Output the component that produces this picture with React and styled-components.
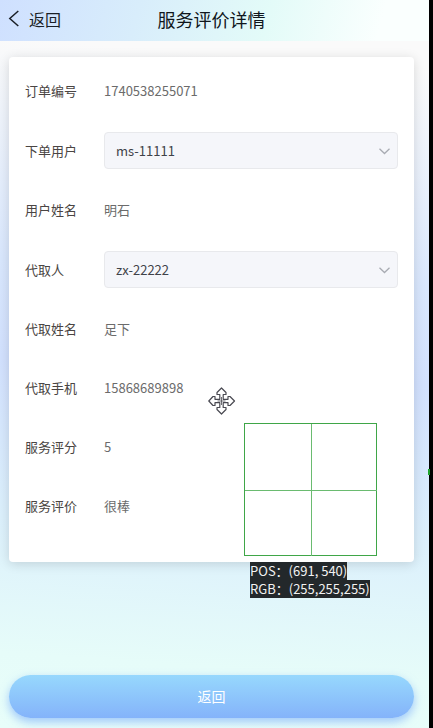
import React, { useState } from "react";
import { createGlobalStyle, styled } from "styled-components";

const GlobalStyle = createGlobalStyle`
    *{
        box-sizing: border-box;
    }
    body{
        margin: 0;
        font-family: "Noto Sans CJK SC", sans-serif;
        background-color: #000;
    }
`;

const Container = styled.div`
    position: relative;
    min-height: 100vh;
    margin-right: 4px;
    display: flex;
    flex-direction: column;
    background: linear-gradient(184deg, #fafafa 0%, #fafafa 9%, #d9e7fd 38%, #d2e1fe 51%, #dcf0fc 72%, #e6fcf9 90%, #e8fefa 100%);
`;

const Header = styled.header`
    height: 41px;
    padding: 0 14px 3px 8px;
    display: grid;
    grid-template-columns: 1fr auto 1fr;
    align-items: center;
    background: linear-gradient(105deg, #cfe0ff 0%, #d8edfb 32%, #e3fbf8 62%, #fafffe 88%);
`;

const BackLink = styled.a`
    display: flex;
    align-items: center;
    gap: 9px;
    color: #1a1f26;
    font-size: 16px;
    line-height: 24px;
    text-decoration: none;
`;

const Title = styled.h1`
    margin: 0;
    color: #10161c;
    font-size: 18px;
    font-weight: 400;
    line-height: 24px;
`;

const Body = styled.main`
    flex: 1;
    padding: 16px 15px 10px 9px;
    display: flex;
    flex-direction: column;
    justify-content: space-between;
    gap: 24px;
`;

const Card = styled.form`
    padding: 16px 16px 38px;
    display: flex;
    flex-direction: column;
    gap: 23px;
    background-color: #fff;
    border-radius: 4px;
    box-shadow: 0 2px 12px rgba(0, 0, 0, 0.14);
`;

const Row = styled.div`
    min-height: 36px;
    display: flex;
    align-items: center;
    font-size: 13px;
    line-height: 20px;
`;

const Label = styled.label`
    width: 79px;
    flex-shrink: 0;
    color: #4a4543;
`;

const Value = styled.output`
    color: #6b6b6b;
`;

const SelectBox = styled.div`
    position: relative;
    flex: 1;
`;

const Select = styled.select`
    appearance: none;
    display: block;
    width: 100%;
    height: 37px;
    padding: 0 30px 0 11px;
    border: 1px solid #e8e9ec;
    border-radius: 4px;
    background-color: #f5f6fa;
    color: #3f4248;
    font-family: inherit;
    font-size: 13px;
`;

const Arrow = styled.svg`
    position: absolute;
    top: 13px;
    right: 8px;
    pointer-events: none;
`;

const BackButton = styled.button`
    height: 43px;
    border: none;
    border-radius: 22px;
    background: linear-gradient(#97d8fd, #84b3fa);
    box-shadow: 0 4px 10px rgba(110, 165, 250, 0.6);
    color: #fff;
    padding: 0 0 2px;
    font-family: inherit;
    font-size: 14px;
`;

const MoveCursor = styled.svg`
    position: absolute;
    top: 387px;
    left: 208px;
`;

const Picker = styled.div`
    position: absolute;
    top: 423px;
    left: 244px;
`;

const Lens = styled.svg`
    display: block;
`;

const Readout = styled.div`
    margin: 5px 0 0 6px;
    display: flex;
    flex-direction: column;
    align-items: flex-start;
    color: #f2f2f2;
    font-size: 13px;
    line-height: 18px;
    white-space: nowrap;
    & > span{
        background-color: #23282b;
    }
`;

const Marker = styled.div`
    position: absolute;
    top: 469px;
    right: -1px;
    width: 2px;
    height: 6px;
    background-color: #1fa32c;
`;

const fields = [
  { id: "orderNo", label: "订单编号", value: "1740538255071" },
  { id: "user", label: "下单用户", value: "ms-11111", select: true },
  { id: "userName", label: "用户姓名", value: "明石" },
  { id: "taker", label: "代取人", value: "zx-22222", select: true },
  { id: "takerName", label: "代取姓名", value: "足下" },
  { id: "takerPhone", label: "代取手机", value: "15868689898" },
  { id: "score", label: "服务评分", value: "5" },
  { id: "comment", label: "服务评价", value: "很棒" },
];

const SelectField = ({ id, value }) => {
  const [selected, setSelected] = useState(value);
  return (
    <SelectBox>
      <Select id={id} value={selected} onChange={(e) => setSelected(e.target.value)}>
        <option value={value}>{value}</option>
      </Select>
      <Arrow width="12" height="12" viewBox="0 0 12 12" fill="none" stroke="#a8abb2" strokeWidth="1.3">
        <path d="M1.5 3.8 6.5 8.5 11.5 3.8" />
      </Arrow>
    </SelectBox>
  );
};

const App = () => {
  return (
    <>
      <GlobalStyle />
      <Container>
        <Header>
          <BackLink href="#">
            <svg width="12" height="18" viewBox="0 0 12 18" fill="none" stroke="#1a1f26" strokeWidth="1.5">
              <path d="M10.3 1 1.8 8.5l8.5 7.5" />
            </svg>
            返回
          </BackLink>
          <Title>服务评价详情</Title>
        </Header>
        <Body>
          <Card>
            {fields.map(({ id, label, value, select }) => (
              <Row key={id}>
                <Label htmlFor={id}>{label}</Label>
                {select ? <SelectField id={id} value={value} /> : <Value id={id}>{value}</Value>}
              </Row>
            ))}
          </Card>
          <BackButton type="button">返回</BackButton>
        </Body>
        <MoveCursor
          width="28"
          height="28"
          viewBox="0 0 28 28"
          fill="#fff"
          stroke="#4a4a52"
          strokeWidth="1.2"
          strokeLinejoin="round"
        >
          <path d="M13.5 1 18 5.5V7.5H15.2V12.3H20V9.5H22L26.5 14 22 18.5H20V15.7H15.2V20.5H18V22.5L13.5 27 9 22.5V20.5H11.8V15.7H7V18.5H5L.8 14 5 9.5H7V12.3H11.8V7.5H9V5.5Z" />
          <path d="M13.5 10v8M9.5 14h8" strokeWidth="0.8" />
        </MoveCursor>
        <Picker>
          <Lens width="134" height="134" viewBox="0 0 134 134" fill="none" stroke="#3fa648">
            <rect x="0.5" y="0.5" width="132" height="132" />
            <path d="M67.5 1v132M1 67.5h132" stroke="#6abb70" />
          </Lens>
          <Readout>
            <span>POS：(691, 540)</span>
            <span>RGB：(255,255,255)</span>
          </Readout>
        </Picker>
        <Marker />
      </Container>
    </>
  );
};

export default App;
